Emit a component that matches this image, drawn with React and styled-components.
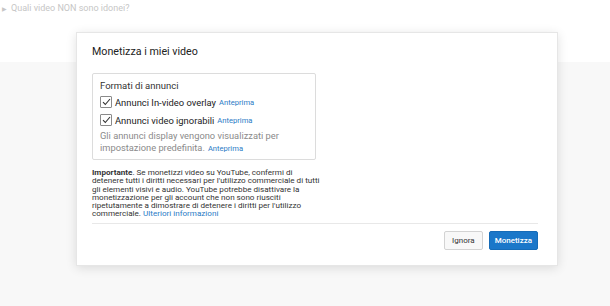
import React from 'react';
import styled, { createGlobalStyle } from 'styled-components';

const GlobalStyle = createGlobalStyle`
  html, body {
    margin: 0;
    padding: 0;
    background: #f8f8f8;
    font-family: Roboto, "Liberation Sans", Arial, sans-serif;
  }
`;

const Page = styled.div`
  position: relative;
  width: 610px;
  height: 306px;
  overflow: hidden;
  background: #f8f8f8;
`;

const TopStrip = styled.div`
  height: 62px;
  background: #fff;
  padding: 2px 0 0 2px;
  box-sizing: border-box;
  font-size: 9px;
  line-height: 12px;
  color: #c6c6c6;

  span {
    margin-right: 4px;
    font-size: 6px;
  }
`;

const Dialog = styled.div`
  position: absolute;
  left: 76px;
  top: 32px;
  width: 482px;
  box-sizing: border-box;
  padding: 11px 19px 15px 15px;
  background: #fff;
  border: 1px solid #e6e6e6;
  box-shadow: 0 2px 10px rgba(0, 0, 0, 0.12);
`;

const Title = styled.h2`
  margin: 0 0 13px;
  font-size: 10.7px;
  line-height: 16px;
  font-weight: 400;
  color: #222;
`;

const FormatBox = styled.div`
  width: 224px;
  box-sizing: border-box;
  padding: 5px 8px 4px 7px;
  border: 1px solid #dcdcdc;
  border-radius: 2px;
`;

const BoxHeading = styled.div`
  font-size: 9.5px;
  line-height: 14px;
  color: #333;
`;

const CheckRow = styled.label`
  display: flex;
  align-items: center;
  height: 18px;
  font-size: 9.4px;
  color: #222;
`;

const Box = styled.span`
  display: inline-flex;
  align-items: center;
  justify-content: center;
  width: 10px;
  height: 10px;
  margin-right: 3px;
  border: 1px solid #8a8a8a;
  border-radius: 1px;
  background: #fff;
`;

const Preview = styled.a`
  margin-left: ${p => (p.inline ? '0' : '3px')};
  font-size: ${p => (p.inline ? 'inherit' : '7.6px')};
  color: #2a7bc6;
  text-decoration: none;
`;

const Note = styled.p`
  margin: 1px 0 0;
  font-size: 9.3px;
  line-height: 12px;
  color: #8a8a8a;
`;

const Important = styled.p`
  margin: 8px 0 0;
  font-size: 8.1px;
  line-height: 8.3px;
  color: #333;
  white-space: nowrap;

  b {
    font-weight: 700;
  }
`;

const Divider = styled.hr`
  margin: 5px 0 7px;
  border: 0;
  border-top: 1px solid #e8e8e8;
`;

const Footer = styled.div`
  display: flex;
  justify-content: flex-end;
  gap: 6px;
`;

const Button = styled.button`
  height: 19px;
  padding: 0 ${p => (p.primary ? '5px' : '7px')};
  font-family: inherit;
  font-size: 8px;
  font-weight: ${p => (p.primary ? 500 : 400)};
  color: ${p => (p.primary ? '#fff' : '#333')};
  background: ${p => (p.primary ? '#1b77c9' : '#f8f8f8')};
  border: 1px solid ${p => (p.primary ? '#166bb7' : '#d3d3d3')};
  border-radius: 2px;
  cursor: pointer;
`;

const Check = () => (
  <Box>
    <svg width="9" height="8" viewBox="0 0 9 8">
      <path d="M1 4.2 L3.3 6.5 L8 1" fill="none" stroke="#333" strokeWidth="1.1" />
    </svg>
  </Box>
);

export default function App() {
  return (
    <Page>
      <GlobalStyle />
      <TopStrip>
        <span>▶</span>Quali video NON sono idonei?
      </TopStrip>
      <Dialog>
        <Title>Monetizza i miei video</Title>
        <FormatBox>
          <BoxHeading>Formati di annunci</BoxHeading>
          <CheckRow>
            <Check />
            Annunci In-video overlay<Preview href="#">Anteprima</Preview>
          </CheckRow>
          <CheckRow>
            <Check />
            Annunci video ignorabili<Preview href="#">Anteprima</Preview>
          </CheckRow>
          <Note>
            Gli annunci display vengono visualizzati per
            <br />
            impostazione predefinita.<Preview href="#">Anteprima</Preview>
          </Note>
        </FormatBox>
        <Important>
          <b>Importante</b>. Se monetizzi video su YouTube, confermi di
          <br />
          detenere tutti i diritti necessari per l'utilizzo commerciale di tutti
          <br />
          gli elementi visivi e audio. YouTube potrebbe disattivare la
          <br />
          monetizzazione per gli account che non sono riusciti
          <br />
          ripetutamente a dimostrare di detenere i diritti per l'utilizzo
          <br />
          commerciale. <Preview href="#" inline>Ulteriori informazioni</Preview>
        </Important>
        <Divider />
        <Footer>
          <Button>Ignora</Button>
          <Button primary>Monetizza</Button>
        </Footer>
      </Dialog>
    </Page>
  );
}
